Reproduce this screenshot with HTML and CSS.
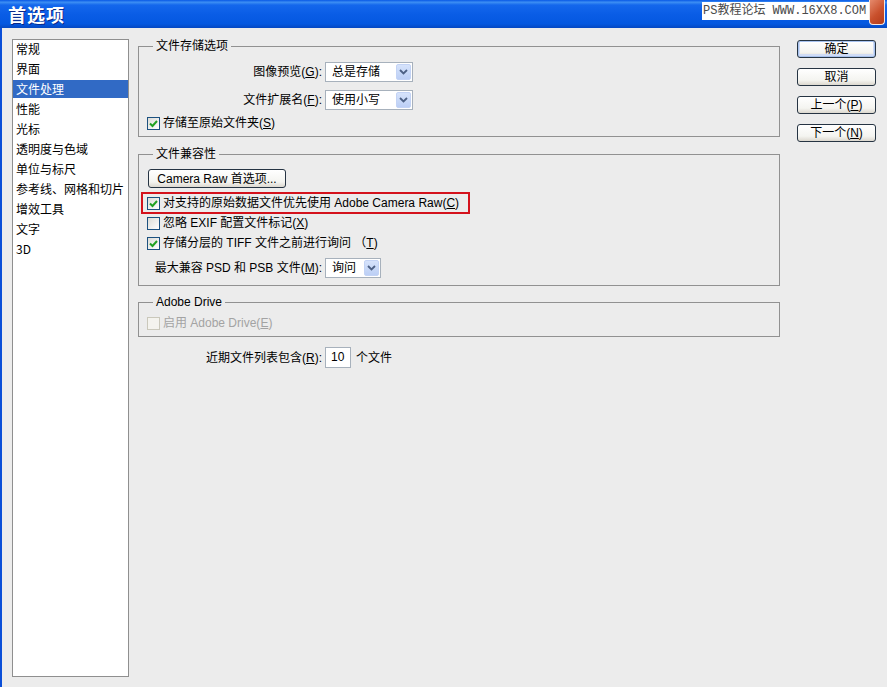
FILE: index.html
```html
<!DOCTYPE html>
<html lang="zh-CN">
  <head>
    <meta charset="UTF-8" />
    <title>首选项</title>
    <link rel="stylesheet" href="styles.css">
  </head>
  <body>
    <div class="window">
      <!-- Title bar -->
      <header class="titlebar">
        <h1 class="title">首选项</h1>
        <span class="watermark">PS教程论坛 WWW.16XX8.COM</span>
        <span class="close-btn"></span>
      </header>

      <div class="main">
        <ul class="nav">
          <li>常规</li>
          <li>界面</li>
          <li class="active">文件处理</li>
          <li>性能</li>
          <li>光标</li>
          <li>透明度与色域</li>
          <li>单位与标尺</li>
          <li>参考线、网格和切片</li>
          <li>增效工具</li>
          <li>文字</li>
          <li>3D</li>
        </ul>

        <div class="content">
          <fieldset class="group group-save">
            <legend>文件存储选项</legend>
            <div class="field-row">
              <label class="field-label">图像预览(<u>G</u>):</label>
              <div class="combo combo-wide">
                <span class="combo-text">总是存储</span>
                <span class="combo-btn"><svg width="9" height="6" viewBox="0 0 9 6"><path d="M1 1 L4.5 4.5 L8 1" fill="none" stroke="#4d6185" stroke-width="1.8"/></svg></span>
              </div>
            </div>
            <div class="field-row">
              <label class="field-label">文件扩展名(<u>F</u>):</label>
              <div class="combo combo-wide">
                <span class="combo-text">使用小写</span>
                <span class="combo-btn"><svg width="9" height="6" viewBox="0 0 9 6"><path d="M1 1 L4.5 4.5 L8 1" fill="none" stroke="#4d6185" stroke-width="1.8"/></svg></span>
              </div>
            </div>
            <div class="check-row check-row-first">
              <span class="check"><svg width="11" height="11" viewBox="0 0 11 11"><path d="M2 5.5 L4.5 8 L9 3" fill="none" stroke="#21a121" stroke-width="2"/></svg></span>
              <span>存储至原始文件夹(<u>S</u>)</span>
            </div>
          </fieldset>

          <fieldset class="group group-compat">
            <legend>文件兼容性</legend>
            <button class="btn btn-wide">Camera Raw 首选项...</button>
            <div class="check-row highlight">
              <span class="check"><svg width="11" height="11" viewBox="0 0 11 11"><path d="M2 5.5 L4.5 8 L9 3" fill="none" stroke="#21a121" stroke-width="2"/></svg></span>
              <span>对支持的原始数据文件优先使用 Adobe Camera Raw(<u>C</u>)</span>
            </div>
            <div class="check-row">
              <span class="check"></span>
              <span>忽略 EXIF 配置文件标记(<u>X</u>)</span>
            </div>
            <div class="check-row">
              <span class="check"><svg width="11" height="11" viewBox="0 0 11 11"><path d="M2 5.5 L4.5 8 L9 3" fill="none" stroke="#21a121" stroke-width="2"/></svg></span>
              <span>存储分层的 TIFF 文件之前进行询问 （<u>T</u>)</span>
            </div>
            <div class="field-row field-row-max">
              <label class="field-label">最大兼容 PSD 和 PSB 文件(<u>M</u>):</label>
              <div class="combo combo-small">
                <span class="combo-text">询问</span>
                <span class="combo-btn"><svg width="9" height="6" viewBox="0 0 9 6"><path d="M1 1 L4.5 4.5 L8 1" fill="none" stroke="#4d6185" stroke-width="1.8"/></svg></span>
              </div>
            </div>
          </fieldset>

          <fieldset class="group group-drive">
            <legend>Adobe Drive</legend>
            <div class="check-row disabled">
              <span class="check"></span>
              <span>启用 Adobe Drive(<u>E</u>)</span>
            </div>
          </fieldset>

          <div class="recent-row">
            <label class="recent-label">近期文件列表包含(<u>R</u>):</label>
            <span class="num-input">10</span>
            <span class="recent-unit">个文件</span>
          </div>
        </div>

        <div class="actions">
          <button class="btn btn-default">确定</button>
          <button class="btn">取消</button>
          <button class="btn">上一个(<u>P</u>)</button>
          <button class="btn">下一个(<u>N</u>)</button>
        </div>
      </div>
    </div>
  </body>
</html>
```

FILE: styles.css
```css
* {
  margin: 0;
  padding: 0;
  box-sizing: border-box;
}

body {
  width: 887px;
  height: 687px;
  overflow: hidden;
  background-color: #ececec;
  color: #000;
  font-family: "Liberation Sans", "Noto Sans CJK SC", sans-serif;
  font-size: 12px;
  line-height: 14px;
}

.window {
  height: 687px;
  display: flex;
  flex-direction: column;
}

/* Title bar */
.titlebar {
  height: 28px;
  display: flex;
  align-items: flex-start;
  background: linear-gradient(
    to bottom,
    #0858e6 0%,
    #3c8ef3 8%,
    #1467ec 18%,
    #0a5de6 50%,
    #0458e0 85%,
    #0448c2 100%
  );
}

.title {
  flex: 1;
  padding-left: 8px;
  color: #fff;
  font-family: "Noto Sans CJK SC", sans-serif;
  font-size: 18px;
  font-weight: bold;
  line-height: 28px;
  letter-spacing: 1px;
  text-shadow: 1px 1px 0 #0a2a8a;
}

.watermark {
  width: 167px;
  height: 18px;
  margin-top: 2px;
  padding-left: 1px;
  background: #fff;
  color: #4a4a4a;
  font-family: "Liberation Mono", "Noto Sans CJK SC", monospace;
  font-size: 12px;
  line-height: 18px;
  white-space: nowrap;
  overflow: hidden;
}

.close-btn {
  width: 16px;
  height: 25px;
  margin-right: 2px;
  border: 1px solid #f4e6df;
  border-top: none;
  border-radius: 0 0 4px 4px;
  background: linear-gradient(135deg, #e58a6c, #c9502c 55%, #b03a1a);
}

/* Main area */
.main {
  flex: 1;
  display: flex;
  align-items: flex-start;
  border-left: 2px solid #0b4fd8;
  padding: 11px 0 10px 10px;
}

.nav {
  width: 117px;
  height: 638px;
  list-style: none;
  background: #fff;
  border: 1px solid #8f8f8f;
  font-family: "Noto Sans CJK SC", sans-serif;
}

.nav li {
  height: 18px;
  margin-bottom: 2px;
  padding-left: 3px;
  line-height: 18px;
  white-space: nowrap;
}

.nav li.active {
  background: #316ac5;
  color: #fff;
}

.content {
  width: 642px;
  margin-left: 9px;
}

/* Groups */
.group {
  border: 1px solid #919191;
  padding: 0 8px;
}

.group legend {
  margin-left: 6px;
  padding: 0 3px;
  line-height: 14px;
}

.group-save {
  padding-top: 9px;
  padding-bottom: 3px;
}

.group-compat {
  margin-top: 10px;
  padding-top: 8px;
  padding-bottom: 7px;
}

.group-drive {
  margin-top: 9px;
  padding-top: 4px;
  padding-bottom: 3px;
}

.field-row {
  display: flex;
  align-items: center;
  height: 20px;
}

.field-row + .field-row {
  margin-top: 8px;
}

.field-row-max {
  margin-top: 5px;
}

.field-label {
  width: 175px;
  margin-right: 3px;
  text-align: right;
  white-space: nowrap;
}

/* Combo boxes */
.combo {
  height: 20px;
  display: flex;
  align-items: center;
  justify-content: space-between;
  background: #fff;
  border: 1px solid #a7b1bc;
  padding: 0 1px 0 6px;
}

.combo-wide {
  width: 88px;
}

.combo-small {
  width: 56px;
}

.combo-btn {
  width: 15px;
  height: 16px;
  display: flex;
  align-items: center;
  justify-content: center;
  background: linear-gradient(#d6e3fb, #bccff5);
  border: 1px solid #c3d3f5;
  border-radius: 2px;
}

/* Checkboxes */
.check-row {
  display: flex;
  align-items: center;
  height: 20px;
  white-space: nowrap;
}

.check-row-first {
  margin-top: 3px;
}

.check {
  width: 13px;
  height: 13px;
  margin-right: 3px;
  display: flex;
  align-items: center;
  justify-content: center;
  border: 1px solid #1c5180;
  background: linear-gradient(135deg, #dcdcd7, #fff);
}

.check-row.disabled {
  color: #a3a3a3;
}

.check-row.disabled .check {
  border-color: #cac8bb;
  background: #f4f3ee;
}

.highlight {
  position: relative;
  width: fit-content;
  margin-top: 5px;
}

.highlight::after {
  content: "";
  position: absolute;
  left: -6px;
  right: -11px;
  top: -1px;
  bottom: -1px;
  border: 2px solid #d4121c;
}

/* Buttons */
.btn {
  width: 79px;
  height: 18px;
  border: 1px solid #263443;
  border-radius: 3px;
  background: linear-gradient(#ffffff, #f4f4f0 70%, #dcd8cf);
  font-family: "Liberation Sans", "Noto Sans CJK SC", sans-serif;
  font-size: 12px;
  line-height: 16px;
  color: #000;
  text-align: center;
}

.btn-wide {
  width: 138px;
  height: 19px;
  margin-left: 1px;
  display: block;
}

.btn-default {
  box-shadow: inset 0 0 0 1px #a7c2ee, inset 0 -1px 0 2px #d0dcf5;
}

.actions {
  width: 79px;
  margin-left: 17px;
  margin-top: 1px;
  display: flex;
  flex-direction: column;
  gap: 10px;
}

/* Recent files */
.recent-row {
  display: flex;
  align-items: center;
  margin-top: 10px;
  height: 21px;
}

.recent-label {
  width: 184px;
  margin-right: 3px;
  text-align: right;
  white-space: nowrap;
}

.num-input {
  width: 26px;
  height: 21px;
  padding-left: 5px;
  line-height: 19px;
  background: #fff;
  border: 1px solid #a7b1bc;
}

.recent-unit {
  margin-left: 5px;
}
```
